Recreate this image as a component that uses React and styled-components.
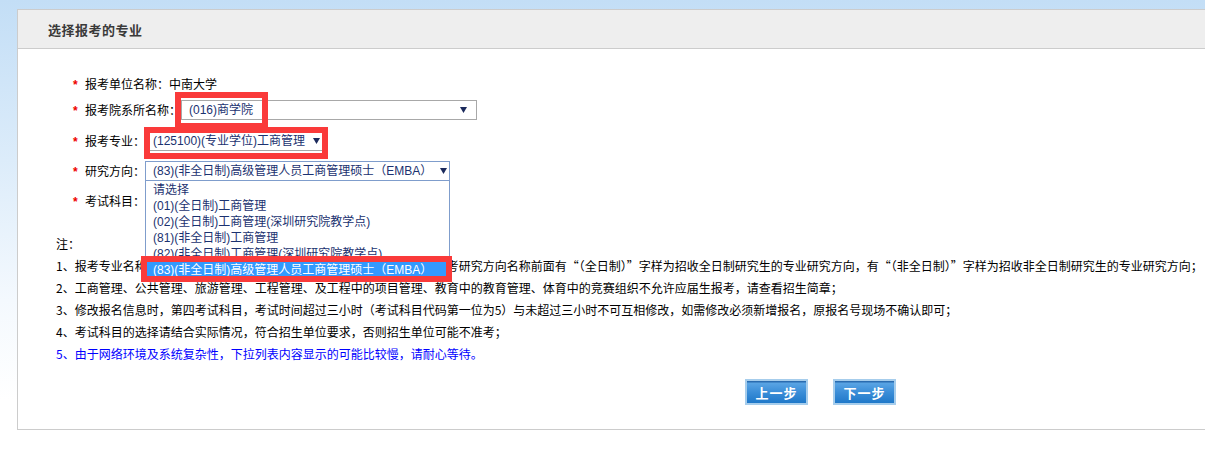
import React from "react";
import styled, { createGlobalStyle } from "styled-components";

const GlobalStyle = createGlobalStyle`
  html, body { margin: 0; padding: 0; }
  body {
    background: linear-gradient(to bottom, #c3def6 0px, #dcecfa 160px, #f4f9fe 300px, #ffffff 400px);
    font-family: "Noto Sans CJK SC", "Liberation Sans", sans-serif;
    font-size: 12px;
    color: #000;
    overflow: hidden;
  }
`;

const Page = styled.div`
  position: relative;
  width: 1205px;
  height: 464px;
  box-sizing: border-box;
  padding: 9px 0 0 17px;
  overflow: hidden;
`;

const Panel = styled.div`
  width: 1220px;
  border: 1px solid #cccccc;
  background: #ffffff;
`;

const Header = styled.div`
  height: 38px;
  background: #eeeeee;
  border-bottom: 1px solid #cccccc;
  padding-left: 30px;
  display: flex;
  align-items: center;
`;

const Title = styled.h2`
  margin: 0;
  font-size: 13px;
  font-weight: bold;
  color: #3a3a3a;
  letter-spacing: 0.5px;
`;

const Body = styled.div`
  padding: 25px 0 24px 0;
`;

const Form = styled.div`
  display: flex;
  flex-direction: column;
  padding-left: 55px;
`;

const Row = styled.div`
  display: flex;
  align-items: center;
  height: 20px;
  margin-top: ${(p) => p.$mt || 0}px;
`;

const Star = styled.span`
  width: 12px;
  color: #ee0000;
  font-family: "Liberation Sans", sans-serif;
  font-weight: bold;
  font-size: 12px;
  line-height: 20px;
  padding-top: 2px;
`;

const Label = styled.span`
  line-height: 20px;
  white-space: nowrap;
`;

const SelectBox = styled.div`
  position: relative;
  box-sizing: border-box;
  height: 20px;
  width: ${(p) => (p.$w ? `${p.$w}px` : "auto")};
  border: 1px solid ${(p) => (p.$focus ? "#7f9dcc" : "#a8a8a8")};
  border-top-color: ${(p) => (p.$focus ? "#7f9dcc" : "#a8a8a8")};
  background: #fff;
  display: inline-flex;
  align-items: center;
  padding: 0 9px 0 7px;
  font-family: "Liberation Sans", "Noto Sans CJK SC", sans-serif;
  font-size: 12px;
  color: #1b3270;
  white-space: nowrap;
`;

const SelText = styled.span`
  flex: 1;
  line-height: 18px;
`;

const Arrow = styled.svg`
  width: 7px;
  height: 6px;
  margin-left: 8px;
  flex: none;
`;

const DropList = styled.div`
  position: absolute;
  left: -1px;
  top: 19px;
  width: 305px;
  box-sizing: border-box;
  border: 1px solid #7f9dcc;
  border-top: none;
  background: #fff;
  padding: 1px 1px 1px 1px;
  z-index: 5;
`;

const Option = styled.div`
  height: 16px;
  line-height: 16px;
  padding-left: 6px;
  color: ${(p) => (p.$active ? "#ffffff" : "#1b3270")};
  background: ${(p) => (p.$active ? "#3399ff" : "transparent")};
  white-space: nowrap;
`;

const Notes = styled.div`
  margin-top: 22px;
  padding-left: 38px;
  display: flex;
  flex-direction: column;
`;

const NoteLine = styled.div`
  line-height: 22px;
  height: 22px;
  white-space: nowrap;
  color: ${(p) => (p.$blue ? "#0000ff" : "#000000")};
`;

const Buttons = styled.div`
  display: flex;
  gap: 25px;
  padding-left: 727px;
  margin-top: 14px;
`;

const StepButton = styled.button`
  width: 63px;
  height: 26px;
  box-sizing: border-box;
  border: 2px solid #a6cdec;
  padding: 0;
  background: linear-gradient(to bottom, #2a6cb0 0px, #2a6cb0 1px, #5aa4e4 2px, #3b8ed8 11px, #1f78c9 22px);
  color: #ffffff;
  font-family: "Noto Sans CJK SC", sans-serif;
  font-weight: bold;
  font-size: 13px;
  letter-spacing: 1px;
  cursor: pointer;
`;

const Mark = styled.div`
  position: absolute;
  box-sizing: border-box;
  border: 6px solid #fa3a3a;
  pointer-events: none;
  z-index: 10;
`;

const DownArrow = () => (
  <Arrow viewBox="0 0 7 6">
    <polygon points="0,0 7,0 3.5,6" fill="#1b2a5c" />
  </Arrow>
);

const options = [
  "请选择",
  "(01)(全日制)工商管理",
  "(02)(全日制)工商管理(深圳研究院教学点)",
  "(81)(非全日制)工商管理",
  "(82)(非全日制)工商管理(深圳研究院教学点)",
  "(83)(非全日制)高级管理人员工商管理硕士（EMBA）",
];

export default function App() {
  return (
    <>
      <GlobalStyle />
      <Page>
        <Panel>
          <Header>
            <Title>选择报考的专业</Title>
          </Header>
          <Body>
            <Form>
              <Row>
                <Star>*</Star>
                <Label>报考单位名称：中南大学</Label>
              </Row>
              <Row $mt={6}>
                <Star>*</Star>
                <Label>报考院系所名称：</Label>
                <SelectBox $w={296}>
                  <SelText>(016)商学院</SelText>
                  <DownArrow />
                </SelectBox>
              </Row>
              <Row $mt={11}>
                <Star>*</Star>
                <Label>报考专业：</Label>
                <SelectBox style={{ paddingRight: 6 }}>
                  <SelText>(125100)(专业学位)工商管理</SelText>
                  <DownArrow />
                </SelectBox>
              </Row>
              <Row $mt={10}>
                <Star>*</Star>
                <Label>研究方向：</Label>
                <SelectBox $w={305} $focus>
                  <SelText>(83)(非全日制)高级管理人员工商管理硕士（EMBA）</SelText>
                  <DownArrow />
                  <DropList>
                    {options.map((o, i) => (
                      <Option key={o} $active={i === options.length - 1}>
                        {o}
                      </Option>
                    ))}
                  </DropList>
                </SelectBox>
              </Row>
              <Row $mt={10}>
                <Star>*</Star>
                <Label>考试科目：</Label>
              </Row>
            </Form>
            <Notes>
              <NoteLine>注：</NoteLine>
              <NoteLine>
                1、报考专业名称前面有“（专业学位）”字样的为专业学位研究生专业，报考研究方向名称前面有“（全日制）”字样为招收全日制研究生的专业研究方向，有“（非全日制）”字样为招收非全日制研究生的专业研究方向；
              </NoteLine>
              <NoteLine>
                2、工商管理、公共管理、旅游管理、工程管理、及工程中的项目管理、教育中的教育管理、体育中的竞赛组织不允许应届生报考，请查看招生简章；
              </NoteLine>
              <NoteLine>
                3、修改报名信息时，第四考试科目，考试时间超过三小时（考试科目代码第一位为5）与未超过三小时不可互相修改，如需修改必须新增报名，原报名号现场不确认即可；
              </NoteLine>
              <NoteLine>4、考试科目的选择请结合实际情况，符合招生单位要求，否则招生单位可能不准考；</NoteLine>
              <NoteLine $blue>5、由于网络环境及系统复杂性，下拉列表内容显示的可能比较慢，请耐心等待。</NoteLine>
            </Notes>
            <Buttons>
              <StepButton>上一步</StepButton>
              <StepButton>下一步</StepButton>
            </Buttons>
          </Body>
        </Panel>
        <Mark style={{ left: 175, top: 92, width: 93, height: 37 }} />
        <Mark style={{ left: 144, top: 127, width: 184, height: 32 }} />
        <Mark style={{ left: 141, top: 256, width: 311, height: 26 }} />
      </Page>
    </>
  );
}
